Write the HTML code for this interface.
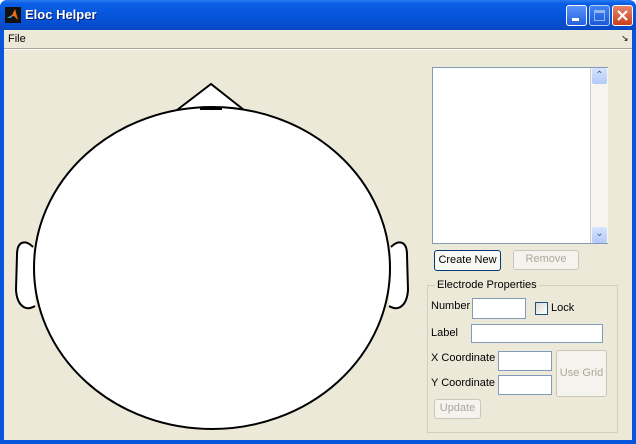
<!DOCTYPE html><html><head><style>
body{margin:0;width:636px;height:444px;overflow:hidden;font-family:Tahoma,"Liberation Sans",sans-serif;font-size:11px}
.win{position:absolute;left:0;top:0;width:636px;height:444px;background:#0855dd;border-radius:7px 7px 0 0}
.title{position:absolute;left:0;top:0;width:636px;height:30px;background:linear-gradient(#2a7bf0 0,#0a5fe6 12%,#0553d8 60%,#0848c4 100%);border-radius:7px 7px 0 0}
.title span{position:absolute;left:25px;top:7px;color:#fff;font-weight:bold;font-size:13px;text-shadow:1px 1px #0a1f6e}
.client{position:absolute;left:4px;top:30px;width:628px;height:410px;background:#ece9d8}
.tb{position:absolute;top:5px;width:21px;height:21px;border:1px solid #fff;border-radius:3px;box-sizing:border-box}
.lbl{position:absolute;color:#000}
.in{position:absolute;background:#fff;border:1px solid #7f9db9;box-sizing:border-box}
.btn{position:absolute;border:1px solid #c9c7ba;border-radius:3px;box-sizing:border-box;color:#aca899;text-align:center;background:#f4f3ee}
</style></head><body>
<div class="win">
<div class="title"><svg style="position:absolute;left:5px;top:7px" width="16" height="16"><rect width="16" height="16" fill="#111"/><path d="M2 11 L7 8 L10 2 L13 13 L9 9 Z" fill="#e8701a"/><path d="M2 11 L7 8 L6 11Z" fill="#3aa3d8"/></svg><span>Eloc Helper</span>
<div class="tb" style="left:566px;background:linear-gradient(#5a95f8,#2560e0)"><div style="position:absolute;left:5px;top:12px;width:7px;height:3px;background:#fff"></div></div>
<div class="tb" style="left:589px;background:linear-gradient(#5a95f8,#2560e0);opacity:.7"><div style="position:absolute;left:4px;top:4px;width:11px;height:11px;border:1px solid #cfe0ff;border-top-width:3px;box-sizing:border-box"></div></div>
<div class="tb" style="left:612px;background:linear-gradient(#e8846a,#c8401c)"><svg width="19" height="19"><path d="M5 5 L14 14 M14 5 L5 14" stroke="#fff" stroke-width="2.2"/></svg></div>
</div>
<div class="client">
<div class="lbl" style="left:4px;top:3px">File</div>
<div class="lbl" style="left:617px;top:3px;font-size:9px">↘</div>
<div style="position:absolute;left:0;top:18px;width:628px;height:1px;background:#aca899"></div>
<div style="position:absolute;left:0;top:19px;width:628px;height:1px;background:#fff"></div>
</div>
<svg style="position:absolute;left:0;top:0" width="636" height="444">
<path d="M177 110 L211 84 L244 110" fill="#fff" stroke="#000" stroke-width="2"/>
<path d="M33 247 C26 240 17 240 17 255 L16 290 C17 305 25 312 35 306" fill="#fff" stroke="#000" stroke-width="2"/>
<path d="M391 247 C398 240 407 240 407 255 L408 290 C407 305 399 312 389 306" fill="#fff" stroke="#000" stroke-width="2"/>
<ellipse cx="212" cy="268" rx="178" ry="161" fill="#fff" stroke="#000" stroke-width="2"/>
<path d="M200 109 L222 109" stroke="#000" stroke-width="2"/>
</svg>
<div class="in" style="left:432px;top:67px;width:176px;height:177px"></div>
<div style="position:absolute;left:590px;top:68px;width:17px;height:175px;background:#f6f5f0;border-left:1px solid #ccc"></div>
<div style="position:absolute;left:592px;top:68px;width:15px;height:16px;background:linear-gradient(#d6e4ff,#b2c9f7);border-radius:2px;color:#4d6185;font-size:10px;text-align:center;line-height:16px">⌃</div>
<div style="position:absolute;left:592px;top:227px;width:15px;height:16px;background:linear-gradient(#d6e4ff,#b2c9f7);border-radius:2px;color:#4d6185;font-size:10px;text-align:center;line-height:14px">⌄</div>
<div class="btn" style="left:434px;top:250px;width:67px;height:21px;border-color:#003c74;color:#000;background:#f8f8f4;line-height:19px">Create New</div>
<div class="btn" style="left:513px;top:250px;width:66px;height:20px;line-height:17px">Remove</div>
<div style="position:absolute;left:427px;top:285px;width:191px;height:148px;border:1px solid #d0d0bf;box-sizing:border-box"></div>
<div class="lbl" style="left:435px;top:279px;background:#ece9d8;padding:0 2px">Electrode Properties</div>
<div class="lbl" style="left:431px;top:300px">Number</div>
<div class="in" style="left:472px;top:298px;width:54px;height:21px"></div>
<div style="position:absolute;left:535px;top:302px;width:13px;height:13px;border:1px solid #1c5180;background:linear-gradient(135deg,#dcdbd5,#fff);box-sizing:border-box"></div>
<div class="lbl" style="left:551px;top:302px">Lock</div>
<div class="lbl" style="left:431px;top:327px">Label</div>
<div class="in" style="left:471px;top:324px;width:132px;height:19px"></div>
<div class="lbl" style="left:431px;top:352px">X Coordinate</div>
<div class="in" style="left:498px;top:351px;width:54px;height:20px"></div>
<div class="lbl" style="left:431px;top:377px">Y Coordinate</div>
<div class="in" style="left:498px;top:375px;width:54px;height:20px"></div>
<div class="btn" style="left:556px;top:350px;width:51px;height:47px;line-height:45px">Use Grid</div>
<div class="btn" style="left:434px;top:399px;width:47px;height:20px;line-height:17px">Update</div>
</div>
</body></html>
